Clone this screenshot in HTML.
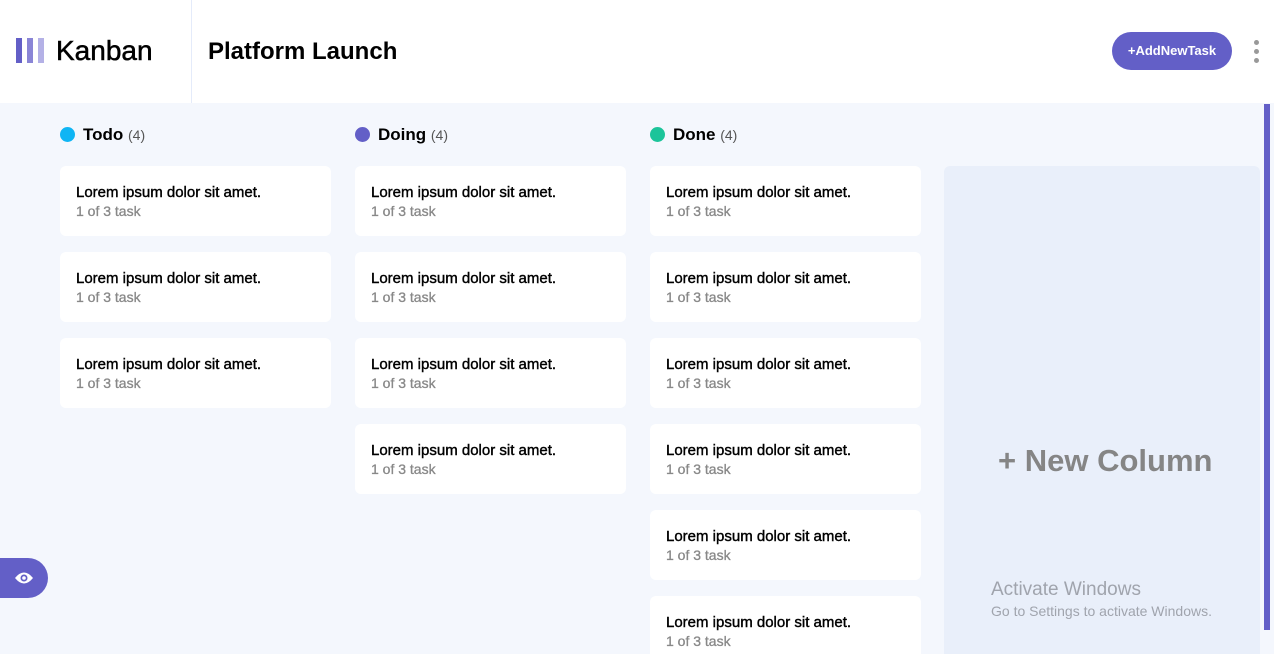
<!DOCTYPE html><html><head><style>
*{margin:0;padding:0;box-sizing:border-box}
html,body{width:1274px;height:654px;overflow:hidden}
body{background:#f4f7fd;font-family:"Liberation Sans",sans-serif;position:relative}
.hdr{position:absolute;left:0;top:0;width:1274px;height:103px;background:#fff}
.logo{position:absolute;left:16px;top:38px}
.logo i{position:absolute;top:0;width:6px;height:25px}
.kb{position:absolute;left:56px;top:35px;font-size:28px;color:#000;-webkit-text-stroke:0.5px #000}
.sep{position:absolute;left:191px;top:0;width:1px;height:103px;background:#e4ebfa}
.pl{position:absolute;left:208px;top:38px;font-size:24px;font-weight:bold;color:#000}
.btn{position:absolute;left:1112px;top:32px;width:120px;height:38px;border-radius:19px;background:#635fc7;color:#fff;font-size:13px;font-weight:bold;text-align:center;line-height:38px}
.dot3{position:absolute;left:1254px;width:5px;height:5px;border-radius:50%;background:#999}
.ch{position:absolute;top:125px;font-size:17px;font-weight:bold;color:#000}
.ch b{display:inline-block;width:15px;height:15px;border-radius:50%;vertical-align:-2px;margin-right:8px}
.ch span{font-weight:normal;font-size:14px;color:#555}
.card{position:absolute;width:271px;height:70px;background:#fff;border-radius:6px;padding:18px 16px}
.card p{font-size:15px;color:#000;-webkit-text-stroke:0.4px #000}
.card s{text-decoration:none;display:block;font-size:14px;color:#888;margin-top:2px;-webkit-text-stroke:0.3px #888}
.nc{position:absolute;left:944px;top:166px;width:316px;height:500px;background:#e9effa;border-radius:6px}
.nct{position:absolute;left:998px;top:443px;font-size:31px;font-weight:bold;color:#858585}
.sb{position:absolute;left:1264px;top:104px;width:6px;height:526px;background:#635fc7}
.eye{position:absolute;left:0;top:558px;width:48px;height:40px;background:#635fc7;border-radius:0 20px 20px 0}
.aw{position:absolute;left:991px;top:579px;color:#a0a4ad;font-size:19px}
.aw2{position:absolute;left:991px;top:603px;color:#a0a4ad;font-size:14px}
</style></head><body>
<div class="hdr">
<div class="logo"><i style="left:0;background:#635fc7"></i><i style="left:11px;background:#8a85d6"></i><i style="left:22px;background:#b4b1e6"></i></div>
<div class="kb">Kanban</div><div class="sep"></div>
<div class="pl">Platform Launch</div>
<div class="btn">+AddNewTask</div>
<div class="dot3" style="top:40px"></div><div class="dot3" style="top:49px"></div><div class="dot3" style="top:58px"></div>
</div>
<div class="ch" style="left:60px"><b style="background:#0fb5f4"></b>Todo <span>(4)</span></div>
<div class="ch" style="left:355px"><b style="background:#635fc7"></b>Doing <span>(4)</span></div>
<div class="ch" style="left:650px"><b style="background:#1cc49a"></b>Done <span>(4)</span></div>
<div class="card" style="left:60px;top:166px"><p>Lorem ipsum dolor sit amet.</p><s>1 of 3 task</s></div>
<div class="card" style="left:60px;top:252px"><p>Lorem ipsum dolor sit amet.</p><s>1 of 3 task</s></div>
<div class="card" style="left:60px;top:338px"><p>Lorem ipsum dolor sit amet.</p><s>1 of 3 task</s></div>
<div class="card" style="left:355px;top:166px"><p>Lorem ipsum dolor sit amet.</p><s>1 of 3 task</s></div>
<div class="card" style="left:355px;top:252px"><p>Lorem ipsum dolor sit amet.</p><s>1 of 3 task</s></div>
<div class="card" style="left:355px;top:338px"><p>Lorem ipsum dolor sit amet.</p><s>1 of 3 task</s></div>
<div class="card" style="left:355px;top:424px"><p>Lorem ipsum dolor sit amet.</p><s>1 of 3 task</s></div>
<div class="card" style="left:650px;top:166px"><p>Lorem ipsum dolor sit amet.</p><s>1 of 3 task</s></div>
<div class="card" style="left:650px;top:252px"><p>Lorem ipsum dolor sit amet.</p><s>1 of 3 task</s></div>
<div class="card" style="left:650px;top:338px"><p>Lorem ipsum dolor sit amet.</p><s>1 of 3 task</s></div>
<div class="card" style="left:650px;top:424px"><p>Lorem ipsum dolor sit amet.</p><s>1 of 3 task</s></div>
<div class="card" style="left:650px;top:510px"><p>Lorem ipsum dolor sit amet.</p><s>1 of 3 task</s></div>
<div class="card" style="left:650px;top:596px"><p>Lorem ipsum dolor sit amet.</p><s>1 of 3 task</s></div>
<div class="nc"></div>
<div class="nct">+ New Column</div>
<div class="aw">Activate Windows</div>
<div class="aw2">Go to Settings to activate Windows.</div>
<div class="sb"></div>
<div class="eye"><svg width="48" height="40" viewBox="0 0 48 40"><path d="M15 20 Q24 9 33 20 Q24 31 15 20Z" fill="#fff"/><circle cx="24" cy="20" r="3.5" fill="#635fc7"/><circle cx="24" cy="20" r="1.8" fill="#fff"/></svg></div>
</body></html>
